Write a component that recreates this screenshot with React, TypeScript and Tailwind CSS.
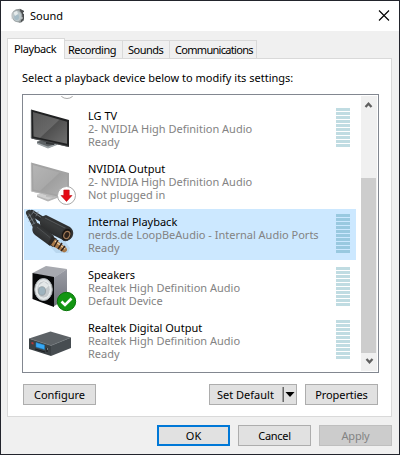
import React from "react";

function SoundIcon() {
  return (
    <svg width="16" height="16" viewBox="0 0 16 16" className="shrink-0">
      <path d="M4.500 1.500 9 .8l4 2.200v9.500L9 15 4.500 13z" fill="#8b9091" />
      <path d="M9 1 13 3v8l-3 3.500z" fill="#4b4e50" />
      <ellipse cx="6" cy="8" rx="4.800" ry="5.800" fill="#bcc7ca" stroke="#9da4a6" strokeWidth="1" transform="rotate(-12 6 8)" />
      <ellipse cx="5.600" cy="9" rx="2.400" ry="3" fill="#a5bbc6" />
      <path d="M2.500 4.500 6 3l1 3-3 2z" fill="#e6ebec" />
      <path d="M1 5v6M12.500 4v2M11 9v2" stroke="#d6d9da" />
    </svg>
  );
}

function Tv({ faded = false }: { faded?: boolean }) {
  const id = faded ? "screenFaded" : "screen";
  return (
    <>
      <defs>
        <linearGradient id={id} x1="0" y1="0" x2="1" y2="1">
          <stop offset="0" stopColor={faded ? "#b5b5b5" : "#585858"} />
          <stop offset=".5" stopColor={faded ? "#a9a9a9" : "#686868"} />
          <stop offset=".52" stopColor={faded ? "#9f9f9f" : "#505050"} />
          <stop offset="1" stopColor={faded ? "#b4b4b4" : "#707070"} />
        </linearGradient>
      </defs>
      <path d="m13 32.500 10-2 10 3v2L24 39l-11-4.500z" fill={faded ? "#cfcfcf" : "#5d6265"} />
      <path d="m13 33.500 11 4 9-3v1.500L24 39.500l-11-4.500z" fill={faded ? "#b5b5b5" : "#9ca3a6"} />
      <path d="m22 30 8 2v4l-8-1z" fill={faded ? "#bcbcbc" : "#323537"} />
      <path d="M7 .5 45 11v27L7.500 29.500z" fill={faded ? "#a3a3a3" : "#202122"} />
      <path d="M9 3 43 12.800v22L9.500 27.500z" fill={`url(#${id})`} />
      <path d="M7.300 1v28L44.500 37.500" fill="none" stroke={faded ? "#bdbdbd" : "#55585a"} strokeWidth=".8" />
    </>
  );
}

function TvIcon() {
  return (
    <svg width="62" height="51" viewBox="0 0 62 51" className="shrink-0">
      <g transform="translate(0 6)"><Tv /></g>
    </svg>
  );
}

function UnpluggedTvIcon() {
  return (
    <svg width="62" height="51" viewBox="0 0 62 51" className="shrink-0">
      <g transform="translate(0 6)"><Tv faded /></g>
      <circle cx="42.500" cy="39.500" r="9" fill="#fff" stroke="#aaa" />
      <path d="M39.800 34h5.400v5.500H48L42.500 45.500 37 39.500h2.800z" fill="#e50a15" stroke="#ba1018" strokeWidth=".6" />
    </svg>
  );
}

function JackIcon() {
  return (
    <svg width="62" height="51" viewBox="0 0 62 51" className="shrink-0">
      <defs>
        <linearGradient id="rubber" x1="0" y1="1" x2=".7" y2="0">
          <stop offset="0" stopColor="#191919" />
          <stop offset=".6" stopColor="#393b3c" />
          <stop offset="1" stopColor="#202122" />
        </linearGradient>
      </defs>
      <path d="m20 31 12 13h12l2-5-6-8z" fill="#668ba8" opacity=".18" />
      <g fill="none" strokeLinecap="round">
        <path d="m8 4 11 7" stroke="#2b2d2e" strokeWidth="6" />
        <path d="m5 4 8 16" stroke="#343738" strokeWidth="6" />
        <path d="m9 3 9 6M5 5l5 9" stroke="#747b7f" strokeWidth="1" />
        <path d="m10 2-2 3m6-2-2 4M3 8l4-2M5 12l4-2M7 16l4-2" stroke="#788189" strokeWidth=".8" />
      </g>
      <path d="m17 8 5-2 24 12q4 3 3 8t-8 6L19 21q-5-5-2-13z" fill="url(#rubber)" />
      <path d="m21 9 22 11" stroke="#56595b" strokeWidth="1" />
      <ellipse cx="42.500" cy="25.500" rx="5" ry="6.500" transform="rotate(25 42.500 25.500)" fill="#1c1816" stroke="#333" />
      <ellipse cx="42.800" cy="26" rx="2.800" ry="3.700" transform="rotate(25 42.800 26)" fill="#2e221b" stroke="#a07a58" strokeWidth="1.200" />
      <path d="m9 17 5-3 16 13-4 10-15-11q-4-3-2-9z" fill="url(#rubber)" />
      <path d="m13 18 13 10.500" stroke="#4e5153" strokeWidth="1" />
      <path d="m28 27 5 3-4 8-5-3z" fill="#2b2724" />
      <path d="m31 30 11.500 9q2 3-2.500 4.500L27 36z" fill="#a97949" />
      <path d="m31 32 10 8" stroke="#ecd0a5" strokeWidth="1.300" />
      <path d="m34 31-4 7m8-4-4 6m7-3-4 5" stroke="#30221a" strokeWidth="1.500" />
    </svg>
  );
}

function SpeakerIcon() {
  return (
    <svg width="62" height="51" viewBox="0 0 62 51" className="shrink-0">
      <defs>
        <linearGradient id="cabinet" x1="0" y1="0" x2="0" y2="1">
          <stop offset="0" stopColor="#9b9da5" />
          <stop offset="1" stopColor="#6f727b" />
        </linearGradient>
      </defs>
      <path d="m8.500 11 13.500-7 21 3-13 9z" fill="#a7a9af" />
      <path d="m29.500 16 13.500-9v29l-13.500 8.500z" fill="url(#cabinet)" />
      <path d="m8.500 11 21.500 4v30L8.500 37z" fill="#08090a" />
      <ellipse cx="19.500" cy="27.500" rx="8.800" ry="11" fill="#dce1e3" stroke="#afb4b7" />
      <ellipse cx="19.500" cy="27.500" rx="6.800" ry="8.700" fill="#c4c9cc" stroke="#eef1f2" />
      <path d="m14 24 6-4.500 5 4-5 5z" fill="#e4e8e9" />
      <ellipse cx="18" cy="29" rx="3.500" ry="4.300" fill="#9eb3be" stroke="#8b9398" strokeWidth=".7" />
      <circle cx="42.500" cy="39.500" r="9.200" fill="#129612" stroke="#087608" />
      <path d="m37.500 39.500 3.500 3.500 6.500-6.500" fill="none" stroke="#fff" strokeWidth="2.600" />
    </svg>
  );
}

function ReceiverIcon() {
  return (
    <svg width="62" height="51" viewBox="0 0 62 51" className="shrink-0">
      <path d="m5 23.500 21.500-7 20.500 6-20 8z" fill="#5d6266" />
      <path d="m5 23.500 22 7V41L5 34z" fill="#3b4144" />
      <path d="m27 30.500 20-8v10.500L27 41z" fill="#474d51" />
      <path d="m5.500 23.500 21.500 7 19.500-8" fill="none" stroke="#747a7e" strokeWidth=".6" />
      <path d="m12 27.500 8.500 2.500v4.500L12 32z" fill="#38a8f5" stroke="#1580c5" strokeWidth=".5" />
      <path d="m7.500 27 2 .6v2l-2-.6z" fill="#bd3937" />
      <path d="m11 34 10 3m2-4v4" stroke="#1c2023" strokeWidth="1.300" />
      <path d="M23.500 33v2" stroke="#8a9194" strokeWidth=".8" />
    </svg>
  );
}

const devices = [
  { name: "LG TV", driver: "2- NVIDIA High Definition Audio", state: "Ready", Icon: TvIcon },
  { name: "NVIDIA Output", driver: "2- NVIDIA High Definition Audio", state: "Not plugged in", Icon: UnpluggedTvIcon, noMeter: true },
  { name: "Internal Playback", driver: "nerds.de LoopBeAudio - Internal Audio Ports", state: "Ready", Icon: JackIcon, selected: true },
  { name: "Speakers", driver: "Realtek High Definition Audio", state: "Default Device", Icon: SpeakerIcon },
  { name: "Realtek Digital Output", driver: "Realtek High Definition Audio", state: "Ready", Icon: ReceiverIcon },
];

function Meter({ active }: { active?: boolean }) {
  return (
    <div className="mt-[5px] flex h-10 w-3.5 flex-col gap-px">
      {Array.from({ length: 10 }, (_, i) => (
        <div key={i} className={`h-[3px] ${active ? "bg-[#99c9e0]" : "bg-[#c0dce2]"}`} />
      ))}
    </div>
  );
}

function Chevron({ down }: { down?: boolean }) {
  return (
    <svg width="16" height="17" viewBox="0 0 16 17" className={down ? "rotate-180" : ""}>
      <path d="m4.500 11 3-3.200 3 3.200" fill="none" stroke="#606060" strokeWidth="2.300" />
    </svg>
  );
}

const button = "flex h-[21px] w-[73px] items-center justify-center border border-[#adadad] bg-[#e1e1e1]";

export default function App() {
  return (
    <div className="flex h-[455px] w-[400px] flex-col overflow-hidden border border-[#22242c] bg-[#f0f0f0] font-['Noto_Sans','Open_Sans',sans-serif] text-[11px] leading-[13px] whitespace-nowrap text-black">
      <header className="flex h-[30px] shrink-0 items-center bg-white pl-2.5">
        <SoundIcon />
        <h1 className="-mt-0.5 ml-[3px] font-normal">Sound</h1>
        <button className="mr-[9px] ml-auto" aria-label="Close">
          <svg className="block" width="12" height="12" viewBox="0 0 12 12"><path d="m1 .5 10 10M11 .5l-10 10" stroke="#000" strokeWidth="1.100" /></svg>
        </button>
      </header>
      <nav className="flex h-[27px] shrink-0 items-end pl-1.5">
        <div className="z-10 -mb-px flex h-[21px] w-[58px] items-center border border-b-0 border-[#d9d9d9] bg-white pb-0.5 pl-1.5 tracking-[-0.4px]">Playback</div>
        <div className="flex h-[18px] w-[58px] items-center border-t border-r border-[#d9d9d9] pl-[3px] tracking-[-0.5px]">Recording</div>
        <div className="flex h-[18px] w-[47px] items-center border-t border-r border-[#d9d9d9] pl-[5px] tracking-[-0.5px]">Sounds</div>
        <div className="flex h-[18px] w-[87px] items-center border-t border-r border-[#d9d9d9] pl-[5px] tracking-[-0.7px]">Communications</div>
      </nav>
      <main className="ml-1.5 flex h-[359px] w-[385px] shrink-0 flex-col border border-[#d9d9d9] bg-white pl-3.5">
        <p className="mt-3">Select a playback device below to modify its settings:</p>
        <div className="mt-[10px] flex h-[279px] w-[357px] shrink-0 border border-[#828790] p-px">
          <div className="flex w-[332px] flex-col gap-0.5">
            <div className="-mb-0.5 h-[7px] pl-[34px]">
              <svg className="block" width="18" height="5" viewBox="0 0 18 5"><path d="M1.500-4a7.500 6.500 0 0 0 15 0" fill="none" stroke="#aaa" /></svg>
            </div>
            {devices.map(({ name, driver, state, Icon, selected, noMeter }) => (
              <div key={name} className={`flex h-[51px] shrink-0 ${selected ? "bg-[#cce8ff]" : ""}`}>
                <Icon />
                <div className="ml-0.5 flex-1 pt-1.5 text-[#838383]">
                  <div className="text-black">{name}</div>
                  <div>{driver}</div>
                  <div>{state}</div>
                </div>
                <div className="mr-1.5">{!noMeter && <Meter active={selected} />}</div>
              </div>
            ))}
          </div>
          <div className="ml-[5px] flex w-4 flex-col bg-[#f0f0f0]">
            <Chevron />
            <div className="mt-[65px] h-[175px] w-[15px] shrink-0 bg-[#cdcdcd]" />
            <Chevron down />
          </div>
        </div>
        <div className="mt-[11px] flex pl-px">
          <button className={button}>Configure</button>
          <button className="ml-[113px] flex h-[21px] w-[88px] items-center border border-[#adadad] bg-[#e1e1e1] pl-[7px]">
            <span className="w-[65px] text-left">Set Default</span>
            <span className="h-[15px] w-0.5 border-l border-[#a0a0a0] bg-[#696969]" />
            <svg className="ml-px" width="10" height="5" viewBox="0 0 10 5"><path d="M.5 0h9L5 5z" /></svg>
          </button>
          <button className={`${button} ml-2`}><span className="tracking-[-0.1px]">Properties</span></button>
        </div>
      </main>
      <footer className="mt-2 flex justify-end gap-2 pr-[7px]">
        <button className="flex h-[21px] w-[73px] items-center justify-center border-2 border-[#0078d7] bg-[#e1e1e1]">OK</button>
        <button className={button}><span className="tracking-[-0.3px]">Cancel</span></button>
        <button className="flex h-[21px] w-[73px] items-center justify-center border border-[#bfbfbf] bg-[#ccc] text-[#838383]"><span className="tracking-[-0.2px]">Apply</span></button>
      </footer>
    </div>
  );
}
